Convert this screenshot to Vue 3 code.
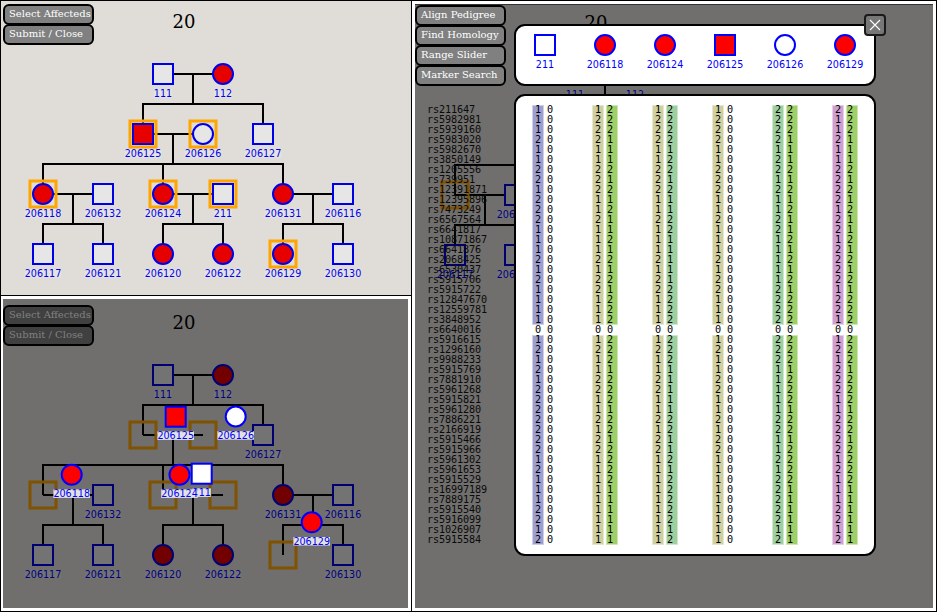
<script setup>
const people = [
  { id: '111', x: 163, y: 74, sex: 'm', sick: false },
  { id: '112', x: 223, y: 74, sex: 'f', sick: true },
  { id: '206125', x: 143, y: 134, sex: 'm', sick: true, picked: true },
  { id: '206126', x: 203, y: 134, sex: 'f', sick: false, picked: true },
  { id: '206127', x: 263, y: 134, sex: 'm', sick: false },
  { id: '206118', x: 43, y: 194, sex: 'f', sick: true, picked: true },
  { id: '206132', x: 103, y: 194, sex: 'm', sick: false },
  { id: '206124', x: 163, y: 194, sex: 'f', sick: true, picked: true },
  { id: '211', x: 223, y: 194, sex: 'm', sick: false, picked: true },
  { id: '206131', x: 283, y: 194, sex: 'f', sick: true },
  { id: '206116', x: 343, y: 194, sex: 'm', sick: false },
  { id: '206117', x: 43, y: 254, sex: 'm', sick: false },
  { id: '206121', x: 103, y: 254, sex: 'm', sick: false },
  { id: '206120', x: 163, y: 254, sex: 'f', sick: true },
  { id: '206122', x: 223, y: 254, sex: 'f', sick: true },
  { id: '206129', x: 283, y: 254, sex: 'f', sick: true, picked: true },
  { id: '206130', x: 343, y: 254, sex: 'm', sick: false },
]
const picked = people.filter((p) => p.picked)
const rest = people.filter((p) => !p.picked)

const links = [
  'M163 74H223M193 74V104M143 134V104H263V134',
  'M143 134H203M173 134V164M43 194V164H283V194M163 164V194',
  'M43 194H103M73 194V224M43 254V224H103V254',
  'M163 194H223M193 194V224M163 254V224H223V254',
  'M283 194H343M313 194V224M283 254V224H343V254',
].join('')

const moving = [
  { id: '211', x: 201.7, y: 172.7, sex: 'm', sick: false },
  { id: '206118', x: 71.7, y: 173.7, sex: 'f', sick: true },
  { id: '206124', x: 179.5, y: 173.7, sex: 'f', sick: true },
  { id: '206125', x: 175.7, y: 115.7, sex: 'm', sick: true },
  { id: '206126', x: 235.7, y: 115.5, sex: 'f', sick: false },
  { id: '206129', x: 311.7, y: 221.3, sex: 'f', sick: true },
]

const selectMenu = ['Select Affecteds', 'Submit / Close']
const haploMenu = ['Align Pedigree', 'Find Homology', 'Range Slider', 'Marker Search']

const scenes = [
  { key: 'select', menu: selectMenu, still: people, top: [] },
  { key: 'moving', menu: selectMenu, still: rest, top: moving },
  { key: 'haplo', menu: haploMenu, still: rest, top: [] },
]

const markers = (
  '211647 5982981 5939160 5983020 5982670 3850149 1205556 739951 12391871 12395896 7473249 ' +
  '6567564 6641817 10871867 6641876 2068425 6530437 5915706 5915722 12847670 12559781 3848952 ' +
  '6640016 5916615 1296160 9988233 5915769 7881910 5961268 5915821 5961280 7886221 2166919 ' +
  '5915466 5915966 5961302 5961653 5915529 16997189 7889175 5915540 5916099 1026907 5915584'
).split(' ').map((n) => 'rs' + n)

const lavender = '11121122122211121211110121212222222121112212'
const olive = '12221122211211121221110121122112122111111111'
const lime = '22211121212112121212220222122212212222111111'
const teal = '22221221211221111122220222111112211212222212'
const violet = '21121122221221222212210121222112222121112212'
const none = '0'.repeat(44)

const split = (s, tone) => [
  { rows: [...s.slice(0, 22)], tone },
  { rows: [s[22]], tone: 'blank' },
  { rows: [...s.slice(23)], tone },
]
const haplotypes = [
  { id: '211', sex: 'm', sick: false, a: split(lavender, 'lavender'), b: split(none, 'blank') },
  { id: '206118', sex: 'f', sick: true, a: split(olive, 'olive'), b: split(lime, 'lime') },
  { id: '206124', sex: 'f', sick: true, a: split(olive, 'olive'), b: split(teal, 'teal') },
  { id: '206125', sex: 'm', sick: true, a: split(olive, 'olive'), b: split(none, 'blank') },
  { id: '206126', sex: 'f', sick: false, a: split(teal, 'teal'), b: split(lime, 'lime') },
  { id: '206129', sex: 'f', sick: true, a: split(violet, 'violet'), b: split(lime, 'lime') },
]
const labelWidth = (id) => id.length * 6.1
</script>

<template>
  <main class="board">
    <section v-for="s in scenes" :key="s.key" class="pane" :class="s.key">
      <div class="stage">
        <svg class="tree" width="405" height="294">
          <text class="title" x="184" y="28" text-anchor="middle">20</text>
          <path class="links" :d="links" />
          <g v-for="p in picked" :key="p.id">
            <rect class="frame" :x="p.x - 13" :y="p.y - 13" width="26" height="26" />
          </g>
          <g v-for="p in s.still" :key="'s' + p.id" class="person" :class="{ sick: p.sick }">
            <rect v-if="p.sex === 'm'" class="shape" :x="p.x - 10" :y="p.y - 10" width="20" height="20" />
            <circle v-else class="shape" :cx="p.x" :cy="p.y" r="10" />
            <rect class="plate" :x="p.x - labelWidth(p.id) / 2" :y="p.y + 15" :width="labelWidth(p.id)" height="8.5" />
            <text class="label" :x="p.x" :y="p.y + 23" text-anchor="middle" :textLength="labelWidth(p.id)" lengthAdjust="spacingAndGlyphs">{{ p.id }}</text>
          </g>
          <g v-for="p in s.top" :key="'t' + p.id" class="person bright" :class="{ sick: p.sick }">
            <rect v-if="p.sex === 'm'" class="shape" :x="p.x - 10" :y="p.y - 10" width="20" height="20" />
            <circle v-else class="shape" :cx="p.x" :cy="p.y" r="10" />
            <rect class="plate" :x="p.x - labelWidth(p.id) / 2" :y="p.y + 14.7" :width="labelWidth(p.id)" height="8.5" />
            <text class="label" :x="p.x" :y="p.y + 22.7" text-anchor="middle" :textLength="labelWidth(p.id)" lengthAdjust="spacingAndGlyphs">{{ p.id }}</text>
          </g>
        </svg>

        <nav class="menu">
          <button v-for="m in s.menu" :key="m" type="button">{{ m }}</button>
        </nav>

        <template v-if="s.key === 'haplo'">
          <ol class="markers">
            <li v-for="m in markers" :key="m">{{ m }}</li>
          </ol>
          <div class="viewer">
            <header class="sheet heads">
              <svg v-for="h in haplotypes" :key="h.id" class="head" width="60" height="58">
                <g class="person bright" :class="{ sick: h.sick }">
                  <rect v-if="h.sex === 'm'" class="shape" x="20" y="9" width="20" height="20" />
                  <circle v-else class="shape" cx="30" cy="19" r="10" />
                  <text class="label" x="30" y="42" text-anchor="middle" :textLength="labelWidth(h.id)" lengthAdjust="spacingAndGlyphs">{{ h.id }}</text>
                </g>
              </svg>
            </header>
            <div class="sheet alleles">
              <div v-for="h in haplotypes" :key="h.id" class="pair">
                <div class="strand first">
                  <div v-for="(r, i) in h.a" :key="i" class="run" :class="r.tone">
                    <span v-for="(v, j) in r.rows" :key="j">{{ v }}</span>
                  </div>
                </div>
                <div class="strand">
                  <div v-for="(r, i) in h.b" :key="i" class="run" :class="r.tone">
                    <span v-for="(v, j) in r.rows" :key="j">{{ v }}</span>
                  </div>
                </div>
              </div>
            </div>
            <button class="close" type="button" aria-label="Close">
              <svg width="18" height="18"><path d="M4 4L14 14M14 4L4 14" /></svg>
            </button>
          </div>
        </template>
      </div>
    </section>
  </main>
</template>

<style>
body {
  margin: 0;
  background: #fff;
}
</style>

<style scoped>
.board {
  box-sizing: border-box;
  width: 937px;
  height: 612px;
  display: grid;
  grid-template-columns: 410px 524px;
  grid-template-rows: 294px 315px;
  gap: 1px;
  padding: 1px;
  background: #000;
  overflow: hidden;
}
.pane {
  box-sizing: border-box;
  background: #fff;
  padding: 3px;
}
.stage {
  position: relative;
  height: 100%;
  background: #706f6d;
  overflow: hidden;
}
.select {
  padding: 0;
}
.select .stage {
  background: #e0ddd9;
}
.moving {
  padding-left: 2px;
}
.haplo {
  grid-column: 2;
  grid-row: 1 / 3;
}
.haplo .stage {
  box-sizing: border-box;
  border-top: 1px solid #333;
}
.tree {
  position: absolute;
  left: -1px;
  top: -1px;
  overflow: visible;
}
.moving .tree {
  left: -3px;
  top: 2px;
}
.haplo .tree {
  left: -3px;
  top: -4px;
}
.title {
  font: 18px "DejaVu Serif", serif;
  fill: #000;
}
.links {
  fill: none;
  stroke: #000;
  stroke-width: 2;
}
.frame {
  fill: none;
  stroke: #ffa500;
  stroke-width: 3;
}
.moving .frame,
.haplo .frame {
  stroke: #805300;
}
.shape {
  fill: #737373;
  stroke: #000073;
  stroke-width: 2;
}
.sick .shape {
  fill: #730000;
}
.plate {
  fill: #737373;
}
.label {
  font: 10.8px "DejaVu Sans", sans-serif;
  fill: #000080;
}
.select .shape {
  fill: #e6e6e6;
  stroke: #0000e6;
}
.select .sick .shape {
  fill: #e60000;
}
.select .plate {
  fill: #e5e3e1;
}
.select .label {
  fill: #0000f0;
}
.bright .shape {
  fill: #fff;
  stroke: #00f;
}
.bright.sick .shape {
  fill: #f00;
}
.bright .plate {
  fill: #e2e2e2;
}
.bright .label {
  fill: #00f;
}
.menu {
  position: relative;
  display: flex;
  flex-direction: column;
  width: 91px;
  padding: 3px 0 0 2px;
}
.moving .menu {
  padding: 6px 0 0;
}
.haplo .menu {
  padding: 0;
}
.menu button {
  box-sizing: border-box;
  height: 21px;
  margin: 0 0 -1px;
  padding: 0 0 1px 4px;
  border: 2px solid #000;
  border-radius: 6px;
  background: #808080;
  color: #fff;
  font: 10px/16px "DejaVu Serif", serif;
  text-align: left;
  white-space: nowrap;
}
.moving .menu button {
  background: #404040;
  color: #808080;
}
.markers {
  position: absolute;
  left: 12px;
  top: 100px;
  margin: 0;
  padding: 0;
  list-style: none;
  font: 10.2px/10px "DejaVu Sans Mono", monospace;
  letter-spacing: -0.13px;
  color: #0a0a0a;
}
.markers li {
  height: 10px;
}
.viewer {
  position: absolute;
  left: 99px;
  top: 19px;
  width: 362px;
  display: flex;
  flex-direction: column;
  gap: 8px;
}
.sheet {
  box-sizing: border-box;
  display: flex;
  justify-content: center;
  border: 2px solid #000;
  border-radius: 11px;
  background: #fff;
}
.heads {
  height: 62px;
}
.head {
  flex: none;
}
.alleles {
  height: 462px;
  padding-top: 9px;
  font: 10.2px/10px "DejaVu Sans Mono", monospace;
  color: #000;
}
.pair {
  flex: none;
  box-sizing: border-box;
  width: 60px;
  padding-left: 18px;
  display: flex;
  gap: 4px;
}
.strand {
  width: 10px;
}
.run {
  position: relative;
  z-index: 0;
}
.run::before {
  content: "";
  position: absolute;
  z-index: -1;
  inset: 1px 0;
  background: var(--tone);
  box-shadow: 0 0 0 1px var(--edge);
}
.run span {
  display: block;
  height: 10px;
}
.first .run span {
  padding-left: 2px;
}
.blank { --tone: transparent; --edge: transparent; }
.lavender { --tone: #9f9fcf; --edge: #9f9fcf80; }
.olive { --tone: #cfcf9f; --edge: #cfcf9f80; }
.lime { --tone: #9fcf68; --edge: #9fcf6880; }
.teal { --tone: #9fcf9f; --edge: #9fcf9f80; }
.violet { --tone: #cf9fcf; --edge: #cf9fcf80; }
.close {
  position: absolute;
  right: -10px;
  top: -10px;
  box-sizing: border-box;
  width: 22px;
  height: 22px;
  padding: 0;
  border: 2px solid #1a1a1a;
  border-radius: 4px;
  background: #777;
}
.close svg {
  display: block;
}
.close path {
  stroke: #fff;
  stroke-width: 1.1;
}
</style>
